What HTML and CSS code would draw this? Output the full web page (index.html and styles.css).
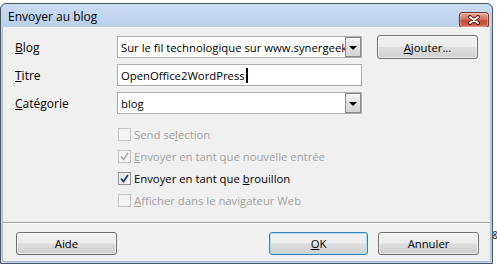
FILE: index.html
```html
<!DOCTYPE html>
<html lang="fr">
<head>
<meta charset="utf-8">
<title>Envoyer au blog</title>
<link rel="stylesheet" href="styles.css">
</head>
<body>
<div class="window">
  <div class="titlebar">
    <span class="title">Envoyer au blog</span>
    <span class="close">
      <svg width="14" height="10" viewBox="0 0 14 10">
        <path d="M3 2 L11 8 M11 2 L3 8" stroke="#5a1a12" stroke-width="4" stroke-linecap="round"/>
        <path d="M3 2 L11 8 M11 2 L3 8" stroke="#ffffff" stroke-width="2" stroke-linecap="round"/>
      </svg>
    </span>
  </div>
  <div class="content">
    <div class="form">
      <label class="lbl"><u>B</u>log</label>
      <div class="field combo">
        <span class="value">Sur le fil technologique sur www.synergeek</span>
        <span class="dropbtn"><span class="tri"></span></span>
      </div>
      <button class="btn add"><u>A</u>jouter...</button>

      <label class="lbl"><u>T</u>itre</label>
      <div class="field">
        <span class="value">OpenOffice2WordPress<span class="caret"></span></span>
      </div>
      <span></span>

      <label class="lbl"><u>C</u>atégorie</label>
      <div class="field combo">
        <span class="value">blog</span>
        <span class="dropbtn"><span class="tri"></span></span>
      </div>
      <span></span>
    </div>

    <div class="checks">
      <div class="check disabled"><span class="box"></span><span>Send se<u>l</u>ection</span></div>
      <div class="check disabled"><span class="box"><svg width="9" height="9" viewBox="0 0 9 9"><path d="M1 4.5 L3.5 7.5 L8 1" fill="none" stroke="#a8a8a8" stroke-width="1.6"/></svg></span><span><u>E</u>nvoyer en tant que nouvelle entrée</span></div>
      <div class="check"><span class="box"><svg width="9" height="9" viewBox="0 0 9 9"><path d="M1 4.5 L3.5 7.5 L8 1" fill="none" stroke="#1f3590" stroke-width="1.8"/></svg></span><span>Envoyer en tant que <u>b</u>rouillon</span></div>
      <div class="check disabled"><span class="box"></span><span><u>A</u>fficher dans le navigateur Web</span></div>
    </div>

    <div class="sep"></div>

    <div class="footer">
      <button class="btn">Aide</button>
      <div class="right">
        <button class="btn default"><u>O</u>K</button>
        <button class="btn">Annuler</button>
      </div>
    </div>
  </div>
</div>
<span class="stray">&amp;</span>
</body>
</html>
```

FILE: styles.css
```css
html, body {
  margin: 0;
  padding: 0;
  background: #ffffff;
}
body {
  font-family: "Open Sans", "Noto Sans", sans-serif;
  font-size: 11.3px;
  color: #000;
  position: relative;
  width: 497px;
  height: 267px;
  overflow: hidden;
}
.window {
  margin-top: 3px;
  width: 493px;
  height: 261px;
  box-sizing: border-box;
  border: 1px solid #4a5561;
  border-radius: 6px 6px 0 0;
  background: #c0d5ed;
  padding: 0 1px 1px 1px;
  display: flex;
  flex-direction: column;
}
.titlebar {
  height: 23px;
  flex: none;
  display: flex;
  align-items: center;
  justify-content: space-between;
  background: linear-gradient(#c9dcf1, #bad0ea);
  border-radius: 5px 5px 0 0;
  padding: 0 2px 0 6px;
}
.title {
  color: #000;
  margin-top: 1px;
  font-size: 12px;
}
.close {
  width: 30px;
  height: 16px;
  margin-top: 8px;
  box-sizing: border-box;
  border: 1px solid #7a3328;
  border-radius: 3px;
  background: linear-gradient(#e9a899 0%, #d6735f 45%, #c34a33 55%, #cf6a50 100%);
  display: flex;
  align-items: center;
  justify-content: center;
  box-shadow: inset 0 0 0 1px rgba(255,255,255,0.35);
}
.content {
  flex: 1;
  background: #f0f0f0;
  border: 1px solid #a9bcd3;
  border-top: none;
  padding: 9px 0 0 0;
  display: flex;
  flex-direction: column;
}
.form {
  display: grid;
  grid-template-columns: 102px 245px 116px;
  grid-auto-rows: 22px;
  row-gap: 6px;
  padding-left: 12px;
}
.lbl {
  display: flex;
  align-items: center;
  font-size: 12px;
}
.field {
  box-sizing: border-box;
  border: 1px solid #abadb3;
  background: #fff;
  display: flex;
  align-items: center;
  overflow: hidden;
}
.value {
  padding-left: 3px;
  white-space: nowrap;
  overflow: hidden;
  flex: 1;
  display: flex;
  align-items: center;
}
.caret {
  display: inline-block;
  width: 2px;
  height: 15px;
  background: #000;
  margin-left: 1px;
}
.dropbtn {
  flex: none;
  width: 16px;
  height: 20px;
  box-sizing: border-box;
  border: 1px solid #8a8a8a;
  background: linear-gradient(#f6f6f6, #e2e2e2 50%, #d6d6d6);
  display: flex;
  align-items: center;
  justify-content: center;
}
.tri {
  width: 0;
  height: 0;
  border-left: 4px solid transparent;
  border-right: 4px solid transparent;
  border-top: 4px solid #000;
  margin-top: 1px;
}
.btn {
  font-family: inherit;
  font-size: 11.3px;
  color: #000;
  box-sizing: border-box;
  border: 1px solid #707070;
  border-radius: 3px;
  background: linear-gradient(#f2f2f2 0%, #ebebeb 48%, #dddddd 52%, #cfcfcf 100%);
  box-shadow: inset 0 0 0 1px rgba(255,255,255,0.6);
  padding: 0;
  height: 23px;
  width: 101px;
}
.add {
  height: 24px;
  margin-top: -1px;
  margin-left: 15px;
}
.btn.default {
  border-color: #3c7fb1;
  box-shadow: inset 0 0 0 1px #a8def7;
  width: 99px;
}
.checks {
  margin-top: 9px;
  padding-left: 115px;
  display: flex;
  flex-direction: column;
}
.check {
  height: 22px;
  display: flex;
  align-items: center;
  gap: 3px;
}
.check.disabled {
  color: #a0a0a0;
}
.box {
  width: 13px;
  height: 13px;
  box-sizing: border-box;
  border: 1px solid #8e8f8f;
  background: linear-gradient(135deg, #dcdcdc, #ffffff);
  box-shadow: inset 0 0 0 1px #f4f4f4;
  display: flex;
  align-items: center;
  justify-content: center;
}
.check.disabled .box {
  border-color: #c3c3c3;
  background: #f4f4f4;
}
.sep {
  margin-top: 11px;
  height: 1px;
  background: #a0a0a0;
  border-bottom: 1px solid #ffffff;
}
.footer {
  margin-top: 8px;
  padding: 0 11px 0 13px;
  display: flex;
  justify-content: space-between;
}
.right {
  display: flex;
  gap: 10px;
}
.stray {
  position: absolute;
  left: 492px;
  top: 228px;
  font-size: 10px;
  color: #222;
}
```
